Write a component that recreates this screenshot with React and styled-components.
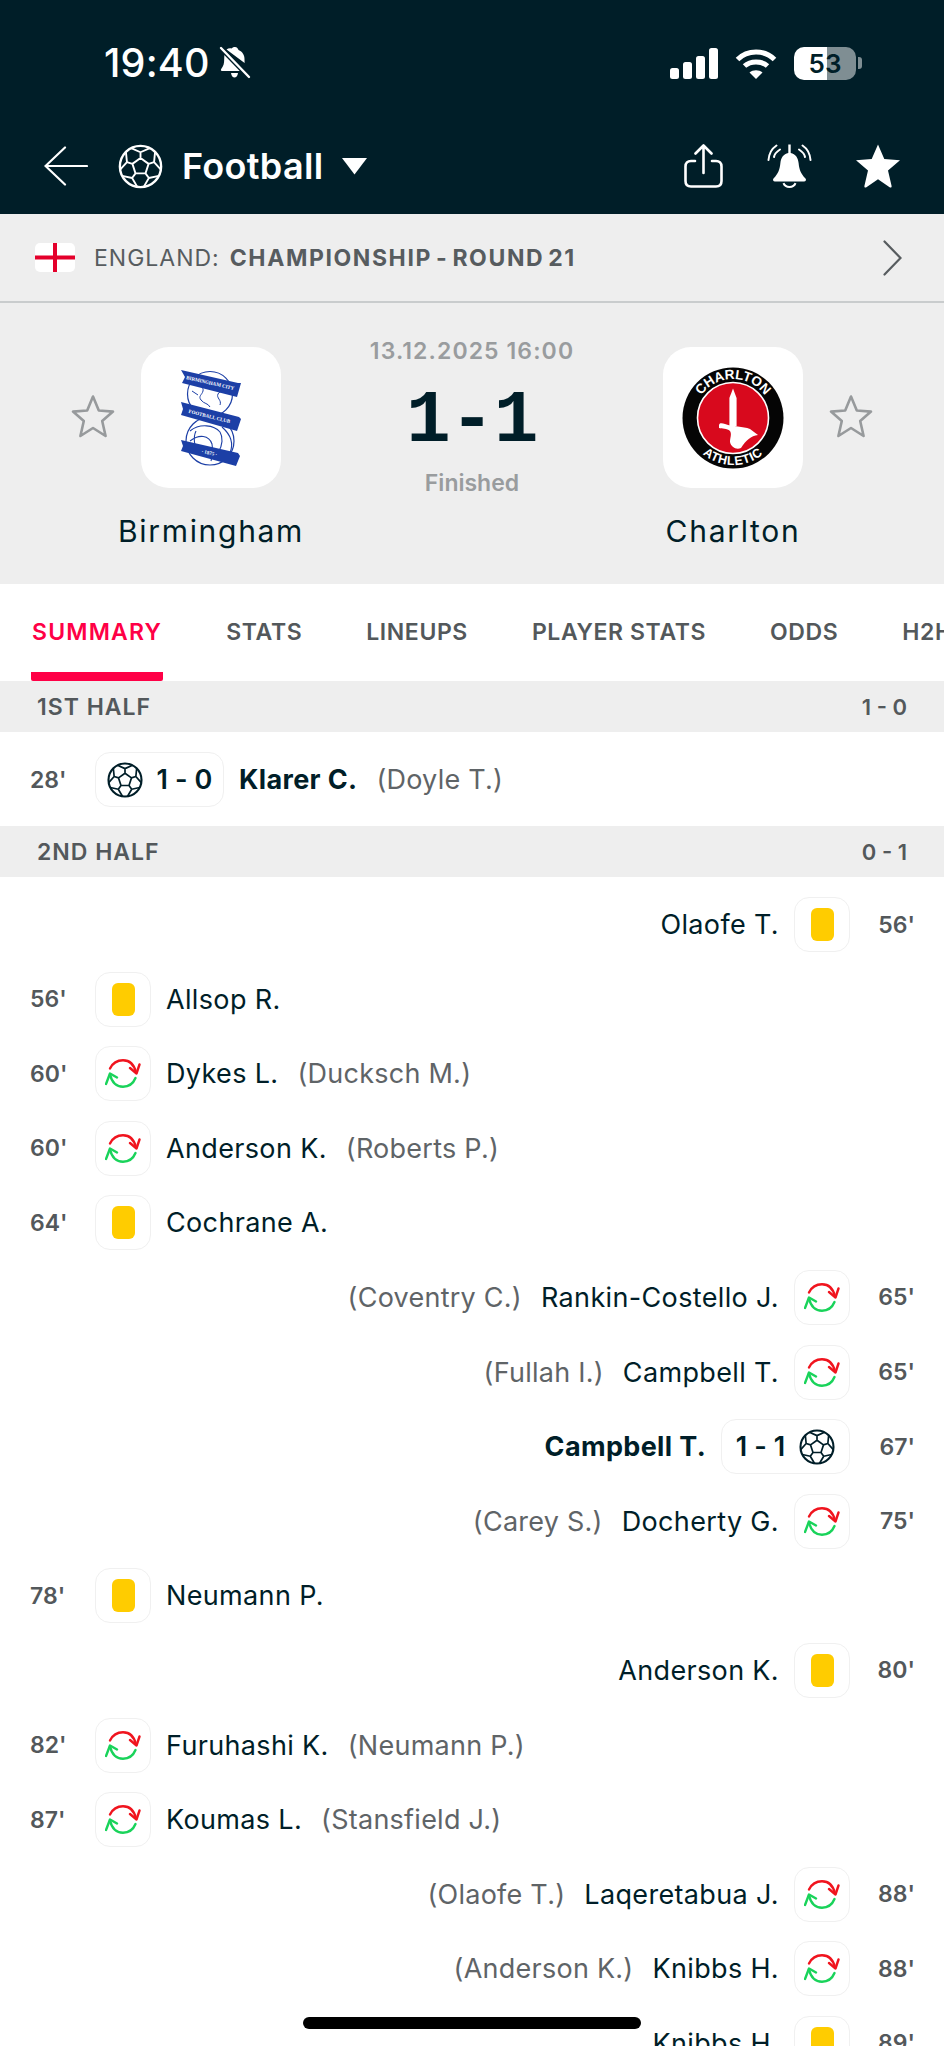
import React from 'react';
import styled, { createGlobalStyle } from 'styled-components';

const INK = '#001e28';
const GREY_BG = '#eeeeee';
const FONT = 'Inter, "Noto Sans", sans-serif';

const GlobalStyle = createGlobalStyle`
  html, body {
    margin: 0;
    padding: 0;
    height: 2046px;
    overflow: hidden;
    background: #fff;
    font-family: ${FONT};
    color: ${INK};
  }
  * { box-sizing: border-box; }
`;

const Page = styled.div`
  position: relative;
  width: 944px;
  height: 2046px;
  overflow: hidden;
  background: #fff;
`;

const Header = styled.header`
  height: 214px;
  padding-top: 44px;
  background: ${INK};
  color: #fff;
`;

const StatusBar = styled.div`
  display: flex;
  align-items: center;
  justify-content: space-between;
  height: 38px;
  padding: 0 82px 0 104px;
`;

const StatusLeft = styled.div`
  display: flex;
  align-items: center;
  gap: 9px;
`;

const Clock = styled.span`
  font-size: 39.5px;
  font-weight: 500;
  line-height: 38px;
  letter-spacing: 0.2px;
`;

const StatusRight = styled.div`
  display: flex;
  align-items: center;
  gap: 17px;
`;

const Battery = styled.div`
  position: relative;
  width: 62px;
  height: 33px;
  border-radius: 10px;
  overflow: hidden;
  background: linear-gradient(90deg, #fff 0 33px, #7f8e93 33px 100%);
  color: ${INK};
  font-size: 26px;
  font-weight: 600;
  line-height: 33px;
  text-align: center;
`;

const BatteryNub = styled.div`
  width: 4px;
  height: 12px;
  margin-left: -15px;
  border-radius: 0 3px 3px 0;
  background: #7f8e93;
`;

const Nav = styled.nav`
  display: flex;
  align-items: center;
  height: 44px;
  margin-top: 62px;
  padding: 0 44px;
`;

const NavTitle = styled.span`
  margin: 0 18px 0 19px;
  font-size: 36px;
  font-weight: 600;
  line-height: 44px;
  letter-spacing: 0.3px;
`;

const NavBall = styled.div`
  display: flex;
  margin-left: 30px;
`;

const NavActions = styled.div`
  display: flex;
  align-items: center;
  gap: 44px;
  margin-left: auto;
`;

const LeagueBar = styled.div`
  display: flex;
  align-items: center;
  height: 89px;
  padding: 0 42px 0 35px;
  background: ${GREY_BG};
  border-bottom: 2px solid #c9cccd;
  color: #575c5f;
  font-size: 23px;
`;

const LeagueCountry = styled.span`
  margin-left: 19px;
  font-weight: 400;
  letter-spacing: 1px;
`;

const LeagueName = styled.span`
  flex: 1;
  margin-left: 10px;
  font-weight: 700;
  letter-spacing: 1.6px;
  word-spacing: -3px;
`;

const MatchPanel = styled.section`
  display: flex;
  align-items: flex-start;
  height: 281px;
  padding: 44px 71px 0;
  background: ${GREY_BG};
`;

const Team = styled.div`
  display: flex;
  flex-direction: ${p => (p.$reverse ? 'row-reverse' : 'row')};
  align-items: flex-start;
  gap: 26px;
`;

const FavStar = styled.div`
  display: flex;
  margin-top: 47px;
`;

const TeamBody = styled.div`
  display: flex;
  flex-direction: column;
  align-items: center;
  width: 140px;
`;

const LogoBox = styled.div`
  display: flex;
  align-items: center;
  justify-content: center;
  width: 140px;
  height: 141px;
  border-radius: 28px;
  background: #fff;
`;

const TeamName = styled.div`
  margin-top: 24px;
  font-size: 30px;
  line-height: 38px;
  letter-spacing: 1.7px;
  white-space: nowrap;
`;

const Centre = styled.div`
  flex: 1;
  display: flex;
  flex-direction: column;
  align-items: center;
  margin-top: -9px;
`;

const MatchDate = styled.div`
  color: #999c9e;
  font-size: 23px;
  font-weight: 600;
  line-height: 26px;
  letter-spacing: 1.1px;
`;

const Score = styled.div`
  margin-top: 19px;
  font-family: "Liberation Mono", monospace;
  font-size: 74px;
  font-weight: 700;
  line-height: 76px;
  letter-spacing: -0.5px;
  color: ${INK};
`;

const MatchState = styled.div`
  margin-top: 10px;
  color: #999c9e;
  font-size: 23px;
  font-weight: 600;
  line-height: 28px;
`;

const Tabs = styled.div`
  display: flex;
  gap: 62px;
  height: 97px;
  padding-left: 31px;
  overflow: hidden;
  background: #fff;
`;

const Tab = styled.div`
  display: flex;
  align-items: flex-start;
  height: 97px;
  padding: 33px 1px 0;
  border-bottom: 9px solid ${p => (p.$active ? '#ff0046' : 'transparent')};
  border-radius: 0 0 2px 2px;
  color: ${p => (p.$active ? '#ff0046' : '#53585b')};
  font-size: 23px;
  font-weight: 600;
  line-height: 30px;
  letter-spacing: ${p => (p.$active ? '1.2px' : '0.6px')};
  white-space: nowrap;
`;

const PeriodHeader = styled.div`
  display: flex;
  align-items: center;
  justify-content: space-between;
  height: 51px;
  padding: 0 37px;
  background: ${GREY_BG};
  color: #53585b;
  font-size: 23px;
  font-weight: 600;
  letter-spacing: 1px;
`;

const PeriodScore = styled.span`
  letter-spacing: 0;
  font-size: 22px;
`;

const Incidents = styled.div`
  display: flex;
  flex-direction: column;
  gap: 19.6px;
  padding: 20px 0 19px;
`;

const Incident = styled.div`
  display: flex;
  flex-direction: ${p => (p.$away ? 'row-reverse' : 'row')};
  align-items: center;
  height: 55px;
  padding: 0 29px 0 30px;
`;

const Minute = styled.span`
  width: 65px;
  flex: none;
  color: #53585b;
  font-size: 23px;
  font-weight: 600;
  text-align: ${p => (p.$away ? 'right' : 'left')};
`;

const Chip = styled.div`
  display: flex;
  flex-direction: ${p => (p.$away ? 'row-reverse' : 'row')};
  align-items: center;
  justify-content: center;
  gap: 14px;
  flex: none;
  width: ${p => (p.$wide ? '129px' : '56px')};
  height: 55px;
  border: 1.5px solid #f0f0f0;
  border-radius: 15px;
  background: #fff;
`;

const YellowCard = styled.div`
  width: 23px;
  height: 33px;
  border-radius: 6px;
  background: #ffcc00;
`;

const ChipScore = styled.span`
  font-size: 27px;
  font-weight: 600;
  letter-spacing: 0.1px;
  white-space: nowrap;
`;

const Player = styled.span`
  margin: 0 15px;
  font-size: 27px;
  font-weight: ${p => (p.$bold ? 700 : 400)};
  letter-spacing: 0.35px;
  white-space: nowrap;
`;

const Assist = styled.span`
  color: #5f6467;
  font-size: 27px;
  letter-spacing: 0.25px;
  white-space: nowrap;
  margin: 0 ${p => (p.$away ? '4px' : '0')} 0 ${p => (p.$away ? '0' : '4px')};
`;

const HomeIndicator = styled.div`
  position: absolute;
  left: 303px;
  top: 2017px;
  width: 338px;
  height: 12px;
  border-radius: 6px;
  background: #000;
`;

const polar = (r, deg) => {
  const a = (deg * Math.PI) / 180;
  return `${18 + r * Math.cos(a)} ${18 + r * Math.sin(a)}`;
};

const ANGLES = [-90, -18, 54, 126, 198];

const BALL_PATH = [
  `M${ANGLES.map(angle => polar(6.8, angle)).join(' L')} Z`,
  ...ANGLES.map(angle => `M${polar(6.8, angle)} L${polar(11.4, angle)} M${polar(16.5, angle - 27)} L${polar(11.4, angle)} L${polar(16.5, angle + 27)}`),
].join(' ');

const Ball = ({ size = 36, color = INK, stroke = 1.7 }) => (
  <svg width={size} height={size} viewBox="0 0 36 36" fill="none" stroke={color} strokeWidth={stroke} strokeLinejoin="round">
    <circle cx="18" cy="18" r="16.5" strokeWidth={stroke + 0.4} />
    <path d={BALL_PATH} />
  </svg>
);

const SubIcon = () => (
  <svg width="36" height="29" viewBox="0 0 36 29" fill="none" strokeWidth="2.4" strokeLinecap="round" strokeLinejoin="round">
    <path d="M5 9.5C8 3.5 13 1.3 18 1.3C24 1.3 29 5 31 13.5" stroke="#f0141e" />
    <path d="M25 9L31.5 14.5L34.5 5.5" stroke="#f0141e" />
    <path d="M30.5 19C28 25 23 27.7 18 27.7C12 27.7 7 24 5 15.5" stroke="#19d35a" />
    <path d="M1 25L5 14.5L12 18.5" stroke="#19d35a" />
  </svg>
);

const OutlineStar = () => (
  <svg width="44" height="45" viewBox="0 0 44 45" fill="none" stroke="#979a9c" strokeWidth="2.6" strokeLinejoin="round">
    <path d="M22 2.5L27.8 16.5L42 17.6L31.2 27L34.6 42L22 34L9.4 42L12.8 27L2 17.6L16.2 16.5Z" />
  </svg>
);

const BirminghamCrest = () => {
  const blue = '#1c3fa6';
  const ribbon = { fill: '#fff', fontFamily: '"Liberation Serif", serif', fontWeight: 700, textAnchor: 'middle' };
  return (
    <svg width="62" height="98" viewBox="0 0 62 98" fill="none">
      <circle cx="30" cy="25" r="22.5" fill="#fff" stroke={blue} strokeWidth="1.2" />
      <path d="M20 12C19 17 24 18 23 22C22 26 18 27 21 31C24 35 28 34 30 38M28 20C32 15 40 13 47 20C45 23 40 21 38 25C36 29 42 31 40 36M34 18L38 20M12 22L18 26" stroke={blue} strokeWidth="1" />
      <circle cx="30" cy="72" r="24" fill="#fff" stroke={blue} strokeWidth="1.2" />
      <path d="M10 62C20 54 34 56 40 63C43 68 43 76 38 84M10 72C19 65 29 66 32 75C33 81 33 85 31 92M16 62C13 68 14 78 19 86M42 58C50 65 54 74 50 84" stroke={blue} strokeWidth="1.1" />
      <path d="M1 1L58 14L61 14L57 28L2 14L5 8Z" fill={blue} />
      <path d="M1 33L59 48L61 50L57 62L1 46L3 40Z" fill={blue} />
      <path d="M1 71L58 84L60 87L56 97L1 82L3 77Z" fill={blue} />
      <text x="30" y="15.5" fontSize="5" transform="rotate(13 30 15.5)" {...ribbon}>BIRMINGHAM CITY</text>
      <text x="29" y="49" fontSize="5" transform="rotate(14 29 49)" {...ribbon}>FOOTBALL CLUB</text>
      <text x="29" y="85.5" fontSize="5" transform="rotate(13 29 85.5)" {...ribbon}>· 1875 ·</text>
    </svg>
  );
};

const CharltonCrest = () => {
  const lettering = { fill: '#fff', fontFamily: '"Liberation Sans", sans-serif', fontWeight: 700, fontSize: 13.5, textAnchor: 'middle' };
  return (
    <svg width="102" height="102" viewBox="-51 -51 102 102">
      <defs>
        <path id="charltonTop" d="M-39 0A39 39 0 0 1 39 0" />
        <path id="charltonBottom" d="M-47 0A47 47 0 0 0 47 0" />
      </defs>
      <circle r="50.5" fill="#050505" />
      <circle r="35.5" fill="#d8091d" stroke="#fff" strokeWidth="1.6" />
      <text {...lettering}>
        <textPath href="#charltonTop" startOffset="50%">CHARLTON</textPath>
      </text>
      <text {...lettering} fontSize="12.5" letterSpacing="0.6">
        <textPath href="#charltonBottom" startOffset="50%">ATHLETIC</textPath>
      </text>
      <path d="M0 -29.5L3.6 -20V8H-3.6V-20Z" fill="#fff" />
      <path d="M-14 7.5C-14 4.5 -11 5 -8 6C0 9 10 8 17 11L25 17C18 18 13 22 8 30C3 32 -2 29 -3 24C-3 20 -1 16 -3 13C-6 10 -11 11 -14 10Z" fill="#fff" />
    </svg>
  );
};

const INCIDENTS_2ND = [
  { away: true, min: "56'", type: 'card', name: 'Olaofe T.' },
  { min: "56'", type: 'card', name: 'Allsop R.' },
  { min: "60'", type: 'sub', name: 'Dykes L.', assist: '(Ducksch M.)' },
  { min: "60'", type: 'sub', name: 'Anderson K.', assist: '(Roberts P.)' },
  { min: "64'", type: 'card', name: 'Cochrane A.' },
  { away: true, min: "65'", type: 'sub', name: 'Rankin-Costello J.', assist: '(Coventry C.)' },
  { away: true, min: "65'", type: 'sub', name: 'Campbell T.', assist: '(Fullah I.)' },
  { away: true, min: "67'", type: 'goal', score: '1 - 1', name: 'Campbell T.' },
  { away: true, min: "75'", type: 'sub', name: 'Docherty G.', assist: '(Carey S.)' },
  { min: "78'", type: 'card', name: 'Neumann P.' },
  { away: true, min: "80'", type: 'card', name: 'Anderson K.' },
  { min: "82'", type: 'sub', name: 'Furuhashi K.', assist: '(Neumann P.)' },
  { min: "87'", type: 'sub', name: 'Koumas L.', assist: '(Stansfield J.)' },
  { away: true, min: "88'", type: 'sub', name: 'Laqeretabua J.', assist: '(Olaofe T.)' },
  { away: true, min: "88'", type: 'sub', name: 'Knibbs H.', assist: '(Anderson K.)' },
  { away: true, min: "89'", type: 'card', name: 'Knibbs H.' },
];

const IncidentRow = ({ item }) => {
  const { away, min, type, name, assist, score } = item;
  return (
    <Incident $away={away}>
      <Minute $away={away}>{min}</Minute>
      <Chip $away={away} $wide={type === 'goal'}>
        {type === 'card' && <YellowCard />}
        {type === 'sub' && <SubIcon />}
        {type === 'goal' && <Ball />}
        {type === 'goal' && <ChipScore>{score}</ChipScore>}
      </Chip>
      <Player $bold={type === 'goal'}>{name}</Player>
      {assist && <Assist $away={away}>{assist}</Assist>}
    </Incident>
  );
};

const App = () => (
  <Page>
    <GlobalStyle />
    <Header>
      <StatusBar>
        <StatusLeft>
          <Clock>19:40</Clock>
          <svg width="32" height="34" viewBox="0 0 32 34" fill="#fff">
            <path d="M16 1C18 1 19 2.5 19.5 4C23.5 5.5 25.5 9 25.5 13.5L25.6 17L7.5 3.5C9 2.6 10.8 2 12.5 2.6C13 1.7 14.5 1 16 1Z" />
            <path d="M5.5 8.5L22.5 25H3C2 25 1.5 24 2.2 23C4.5 20 5.2 17.5 5.2 13.5C5.2 11.5 5.3 10 5.5 8.5Z" />
            <path d="M12 27H19C18.6 30 17 31.5 15.5 31.5C14 31.5 12.4 30 12 27Z" />
            <path d="M2 2L30 31" stroke={INK} strokeWidth="5" />
            <path d="M2 2L30 31" stroke="#fff" strokeWidth="2.4" strokeLinecap="round" />
          </svg>
        </StatusLeft>
        <StatusRight>
          <svg width="48" height="31" viewBox="0 0 48 31" fill="#fff">
            <rect x="0" y="20" width="9" height="11" rx="2.5" />
            <rect x="13" y="14" width="9" height="17" rx="2.5" />
            <rect x="26" y="8" width="9" height="23" rx="2.5" />
            <rect x="39" y="0" width="9" height="31" rx="2.5" />
          </svg>
          <svg width="42" height="31" viewBox="0 0 42 31" fill="none" stroke="#fff" strokeWidth="5">
            <path d="M2.5 11.5C12.5 1.5 29.5 1.5 39.5 11.5" />
            <path d="M9.5 18C15.5 12.5 26.5 12.5 32.5 18" />
            <path d="M21 31L14.5 24.5C18 21.5 24 21.5 27.5 24.5Z" fill="#fff" stroke="none" />
          </svg>
          <Battery>53</Battery>
          <BatteryNub />
        </StatusRight>
      </StatusBar>
      <Nav>
        <svg width="44" height="40" viewBox="0 0 44 40" fill="none" stroke="#fff" strokeWidth="2.2" strokeLinecap="round">
          <path d="M21 1.5L1.5 20L21 38.5M1.5 20H43" />
        </svg>
        <NavBall>
          <Ball size={45} color="#fff" stroke={1.5} />
        </NavBall>
        <NavTitle>Football</NavTitle>
        <svg width="27" height="18" viewBox="0 0 27 18" fill="#fff">
          <path d="M1 1H26L13.5 17.5Z" />
        </svg>
        <NavActions>
          <svg width="39" height="44" viewBox="0 0 39 44" fill="none" stroke="#fff" strokeWidth="2.6" strokeLinecap="round" strokeLinejoin="round">
            <path d="M11 17H7C3.5 17 1.5 19 1.5 22.5V37C1.5 40.5 3.5 42.5 7 42.5H32C35.5 42.5 37.5 40.5 37.5 37V22.5C37.5 19 35.5 17 32 17H28" />
            <path d="M19.5 29V2M11.5 9.5L19.5 1.5L27.5 9.5" />
          </svg>
          <svg width="45" height="44" viewBox="0 0 45 44" fill="#fff">
            <path d="M21.3 0.5H23.7V9C28.5 10 31 13.5 31.6 19C32.2 25 33.6 29.5 38.5 34.5C39.6 36 38.8 37.5 37 37.5H8C6.2 37.5 5.4 36 6.5 34.5C11.4 29.5 12.8 25 13.4 19C14 13.5 16.5 10 21.3 9Z" />
            <path d="M16.5 39.2C17.5 42 19.8 43 22.5 43C25.2 43 27.5 42 28.5 39.2" fill="none" stroke="#fff" strokeWidth="2" />
            <path d="M9.5 1.5C5 4.5 2 9.5 1.5 16M13 5.5C10 7.5 7.5 10 7 13M35.5 1.5C40 4.5 43 9.5 43.5 16M32 5.5C35 7.5 37.5 10 38 13" fill="none" stroke="#fff" strokeWidth="2" strokeLinecap="round" />
          </svg>
          <svg width="44" height="44" viewBox="0 0 44 44" fill="#fff">
            <path d="M22 0.5L28.3 15L44 16.3L32 26.6L35.6 42C35.8 43.4 34.8 44 33.6 43.3L22 35.3L10.4 43.3C9.2 44 8.2 43.4 8.4 42L12 26.6L0 16.3L15.7 15Z" />
          </svg>
        </NavActions>
      </Nav>
    </Header>

    <LeagueBar>
      <svg width="40" height="29" viewBox="0 0 40 29">
        <rect width="40" height="29" rx="5" fill="#fff" />
        <path d="M0 12.5H40V16.5H0ZM18 0H22V29H18Z" fill="#e4002b" />
      </svg>
      <LeagueCountry>ENGLAND:</LeagueCountry>
      <LeagueName>CHAMPIONSHIP - ROUND 21</LeagueName>
      <svg width="19" height="36" viewBox="0 0 19 36" fill="none" stroke="#575c5f" strokeWidth="2.2" strokeLinecap="round">
        <path d="M1.5 1.5L17.5 18L1.5 34.5" />
      </svg>
    </LeagueBar>

    <MatchPanel>
      <Team>
        <FavStar><OutlineStar /></FavStar>
        <TeamBody>
          <LogoBox><BirminghamCrest /></LogoBox>
          <TeamName>Birmingham</TeamName>
        </TeamBody>
      </Team>
      <Centre>
        <MatchDate>13.12.2025 16:00</MatchDate>
        <Score>1-1</Score>
        <MatchState>Finished</MatchState>
      </Centre>
      <Team $reverse>
        <FavStar><OutlineStar /></FavStar>
        <TeamBody>
          <LogoBox><CharltonCrest /></LogoBox>
          <TeamName>Charlton</TeamName>
        </TeamBody>
      </Team>
    </MatchPanel>

    <Tabs>
      <Tab $active>SUMMARY</Tab>
      <Tab>STATS</Tab>
      <Tab>LINEUPS</Tab>
      <Tab>PLAYER STATS</Tab>
      <Tab>ODDS</Tab>
      <Tab>H2H</Tab>
    </Tabs>

    <PeriodHeader>
      <span>1ST HALF</span>
      <PeriodScore>1 - 0</PeriodScore>
    </PeriodHeader>
    <Incidents>
      <Incident>
        <Minute>28'</Minute>
        <Chip $wide>
          <Ball />
          <ChipScore>1 - 0</ChipScore>
        </Chip>
        <Player $bold>Klarer C.</Player>
        <Assist>(Doyle T.)</Assist>
      </Incident>
    </Incidents>

    <PeriodHeader>
      <span>2ND HALF</span>
      <PeriodScore>0 - 1</PeriodScore>
    </PeriodHeader>
    <Incidents>
      {INCIDENTS_2ND.map(item => (
        <IncidentRow key={`${item.min}${item.name}`} item={item} />
      ))}
    </Incidents>

    <HomeIndicator />
  </Page>
);

export default App;
